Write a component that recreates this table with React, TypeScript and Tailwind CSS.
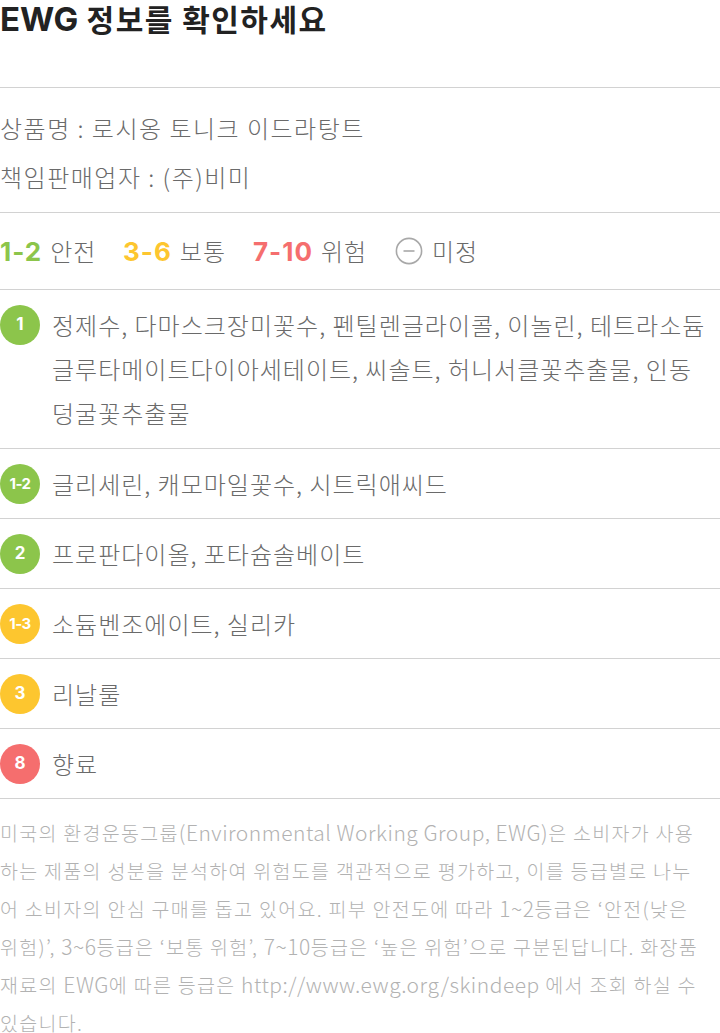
import React from "react";

type Grade = "green" | "yellow" | "red";

const gradeBg: Record<Grade, string> = {
  green: "bg-[#8cc54b]",
  yellow: "bg-[#fdc62f]",
  red: "bg-[#f56e6e]",
};

// line breaks follow the original layout
const ingredients: { label: string; grade: Grade; lines: string[] }[] = [
  {
    label: "1",
    grade: "green",
    lines: [
      "정제수, 다마스크장미꽃수, 펜틸렌글라이콜, 이놀린, 테트라소듐",
      "글루타메이트다이아세테이트, 씨솔트, 허니서클꽃추출물, 인동",
      "덩굴꽃추출물",
    ],
  },
  { label: "1-2", grade: "green", lines: ["글리세린, 캐모마일꽃수, 시트릭애씨드"] },
  { label: "2", grade: "green", lines: ["프로판다이올, 포타슘솔베이트"] },
  { label: "1-3", grade: "yellow", lines: ["소듐벤조에이트, 실리카"] },
  { label: "3", grade: "yellow", lines: ["리날룰"] },
  { label: "8", grade: "red", lines: ["향료"] },
];

const Badge = ({ label, grade }: { label: string; grade: Grade }) => (
  <div
    className={`${gradeBg[grade]} w-[40px] h-[40px] shrink-0 rounded-full flex items-center justify-center text-white font-bold font-['Inter',sans-serif] mt-[2px] ${
      label.length > 1 ? "text-[15px] tracking-[-0.5px]" : "text-[17px]"
    }`}
  >
    {label}
  </div>
);

const LegendItem = ({ num, color, word, width }: { num: string; color: string; word: string; width: string }) => (
  <div className={`flex items-center ${width}`}>
    <span className={`font-bold font-['Inter',sans-serif] text-[26px] tracking-[1px] mr-[8px] ${color}`}>{num}</span>
    <span>{word}</span>
  </div>
);

const Latin = ({ children }: { children: React.ReactNode }) => (
  <span className="text-[21px] leading-none tracking-[0.5px]">{children}</span>
);

const App = () => {
  return (
    <div className="w-[720px] bg-white overflow-hidden font-['Noto_Sans_CJK_KR','Noto_Sans',sans-serif]">
      {/* header */}
      <div className="h-[88px] border-b border-[#d2d2d2]">
        <h1 className="text-[30px] leading-[36px] font-bold text-[#222] tracking-[1.5px] whitespace-nowrap">
          <span className="font-['Inter','Noto_Sans_CJK_KR',sans-serif] text-[33px] leading-none tracking-normal">EWG</span> 정보를 확인하세요
        </h1>
      </div>

      {/* product info */}
      <div className="pt-[15px] pb-[11px] border-b border-[#d2d2d2] text-[24px] leading-[49px] tracking-[1.5px] font-light text-[#6a6a6a]">
        <p>상품명 : 로시옹 토니크 이드라탕트</p>
        <p>책임판매업자 : (주)비미</p>
      </div>

      {/* legend */}
      <div className="h-[77px] flex items-center border-b border-[#d2d2d2] text-[24px] tracking-[1px] font-light text-[#6a6a6a]">
        <LegendItem num="1-2" color="text-[#8cc54b]" word="안전" width="w-[123px]" />
        <LegendItem num="3-6" color="text-[#fdc62f]" word="보통" width="w-[130px]" />
        <LegendItem num="7-10" color="text-[#f56e6e]" word="위험" width="w-[142px]" />
        <svg width="28" height="28" viewBox="0 0 28 28" className="mr-[9px]">
          <circle cx="14" cy="14" r="12.6" fill="none" stroke="#a8a8a8" strokeWidth="1.6" />
          <line x1="8.5" y1="14" x2="19.5" y2="14" stroke="#a8a8a8" strokeWidth="1.6" />
        </svg>
        <span>미정</span>
      </div>

      {/* ingredients */}
      {ingredients.map((item, i) => (
        <div
          key={item.label + i}
          className={`flex items-start gap-[12px] pt-[13px] border-b border-[#d2d2d2] ${i === 0 ? "pb-[13px]" : "pb-[12px]"}`}
        >
          <Badge label={item.label} grade={item.grade} />
          <div className="text-[24px] leading-[44px] tracking-[1px] font-light text-[#6a6a6a]">
            {item.lines.map((line) => (
              <p key={line} className="whitespace-nowrap">
                {line}
              </p>
            ))}
          </div>
        </div>
      ))}

      {/* footer note */}
      <div className="pt-[15px] text-[19.5px] leading-[38px] tracking-[1.3px] font-light text-[#b2b2b2]">
        <p className="whitespace-nowrap">
          미국의 환경운동그룹<Latin>(Environmental Working Group, EWG)</Latin>은 소비자가 사용
        </p>
        <p className="whitespace-nowrap">하는 제품의 성분을 분석하여 위험도를 객관적으로 평가하고, 이를 등급별로 나누</p>
        <p className="whitespace-nowrap">
          어 소비자의 안심 구매를 돕고 있어요. 피부 안전도에 따라 <Latin>1~2</Latin>등급은 ‘안전(낮은
        </p>
        <p className="whitespace-nowrap">
          위험)’, <Latin>3~6</Latin>등급은 ‘보통 위험’, <Latin>7~10</Latin>등급은 ‘높은 위험’으로 구분된답니다. 화장품
        </p>
        <p className="whitespace-nowrap">
          재료의 <Latin>EWG</Latin>에 따른 등급은 <Latin>http://www.ewg.org/skindeep</Latin> 에서 조회 하실 수
        </p>
        <p className="whitespace-nowrap">있습니다.</p>
      </div>
    </div>
  );
};

export default App;
